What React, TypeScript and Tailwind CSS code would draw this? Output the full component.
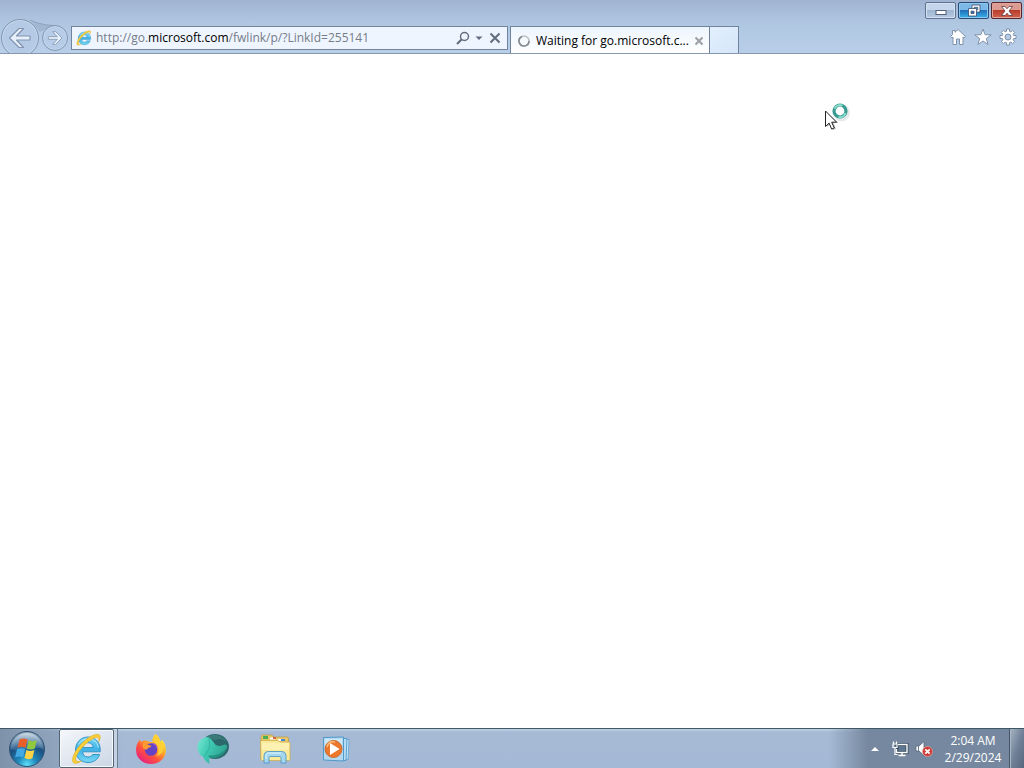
import React from 'react';

const IeLogo: React.FC<{ id: string; className: string }> = ({ id, className }) => (
  <svg viewBox="0 0 32 32" className={className} aria-hidden="true">
    <defs>
      <linearGradient id={id} x1="0" y1="0" x2="0" y2="1">
        <stop offset="0" stopColor="#7bd6f5" />
        <stop offset="0.5" stopColor="#3fb2e6" />
        <stop offset="1" stopColor="#79d9f5" />
      </linearGradient>
    </defs>
    <path
      d="M17 4C9.600 4 4.500 9.700 4.500 17S9.800 29.500 17 29.500c5.600 0 10-3 11.600-8h-7c-1 1.700-2.500 2.500-4.600 2.500-3.200 0-5.200-2-5.400-5.200H29.200C30 10.500 25 4 17 4Zm-5.300 10.500C12.200 11.500 14.200 9.700 17 9.700s4.800 1.800 5.200 4.800Z"
      fill={`url(#${id})`}
      stroke="#2b8fc4"
      strokeWidth="0.9"
    />
    <path d="M7.500 11.500C9.500 8 13 5.800 17 5.800c5.500 0 9.500 3.500 10.300 8.500" fill="none" stroke="#b9ecfd" strokeWidth="1" />
    <path
      d="M27.700 8.500C29.500 5 29.800 2.500 27.800 1.700 23-.1 12.200 7.200 6.400 15.600.8 23.700.1 30.300 4.300 30.300c1.700 0 3.800-.9 6-2.300-3.300 1-5.300.8-5.600-1.100-.5-3 2.200-7.800 6.600-12.600C16.900 8.200 24.200 3.300 27 4.300c1.100.4 1.200 1.900.7 4.200Z"
      fill="#f9cf38"
      stroke="#e0b32a"
      strokeWidth="0.8"
    />
  </svg>
);

const ArrowIcon: React.FC<{ flip?: boolean; className: string }> = ({ flip, className }) => (
  <svg viewBox="0 0 24 24" className={className} aria-hidden="true">
    <path
      d="M1.500 12 11 2.500h4.500L8.500 10H22v4H8.500l7 7.500H11Z"
      transform={flip ? 'matrix(-1 0 0 1 24 0)' : undefined}
      fill="#e7f0fb"
      stroke="#8295b0"
      strokeWidth="1.200"
      strokeLinejoin="round"
    />
  </svg>
);

const WindowButtons: React.FC = () => (
  <div className="flex h-5 justify-end gap-[2px] pr-[2px]">
    <button
      aria-label="Minimize"
      className="mt-[2px] flex h-[17px] w-[31px] items-center justify-center rounded-[2px] border border-[#60738e] bg-linear-to-b from-[#c6d6ea] from-45% via-[#9fb5d1] via-50% to-[#b7cae3] shadow-[inset_0_0_0_1px_#d3e1f2]"
    >
      <svg viewBox="0 0 14 12" className="h-3 w-[14px]">
        <rect x="2" y="5.500" width="10" height="4" fill="#fff" stroke="#53607a" />
      </svg>
    </button>
    <button
      aria-label="Restore"
      className="mt-[2px] flex h-[17px] w-[31px] items-center justify-center rounded-[2px] border border-[#294c75] bg-linear-to-b from-[#7db9e8] from-45% via-[#2371b8] via-50% to-[#38b5ed] shadow-[inset_0_0_0_1px_#8dc7ed]"
    >
      <svg viewBox="0 0 14 13" className="h-[13px] w-[14px]">
        <path d="M5 1h8v7H5Zm2.200 2.300v2.400h3.600V3.300Z" fill="#fff" fillRule="evenodd" stroke="#374a69" strokeWidth="0.800" />
        <path d="M1.500 4.500H9.500V12h-8Z" fill="#fff" stroke="#374a69" strokeWidth="0.800" />
        <path d="M4 7.200h3v2.300H4Z" fill="#2c77b8" stroke="#374a69" strokeWidth="0.800" />
      </svg>
    </button>
    <button
      aria-label="Close"
      className="mt-[2px] flex h-[17px] w-[31px] items-center justify-center rounded-[2px] border border-[#57262b] bg-linear-to-b from-[#dc9c93] from-45% via-[#ba3c2b] via-50% to-[#cf6350] shadow-[inset_0_0_0_1px_#e2a49b]"
    >
      <svg viewBox="0 0 14 12" className="h-3 w-[14px]">
        <path
          d="M1.500 1.500H5L7 3.700l2-2.200h3.500L9 6l3.500 4.500H9L7 8.300l-2 2.200H1.500L5 6Z"
          fill="#fff"
          stroke="#643a40"
          strokeWidth="0.800"
        />
      </svg>
    </button>
  </div>
);

const AddressBar: React.FC = () => (
  <div className="mt-[6px] ml-[3px] flex h-6 min-w-0 flex-1 items-center border border-[#72849d] bg-[#eff5fe] pr-[3px] pl-1">
    <IeLogo id="ieSmall" className="h-4 w-4 shrink-0" />
    <div
      role="textbox"
      aria-label="Address"
      tabIndex={0}
      className="ml-1 min-w-0 flex-1 truncate text-[12px] leading-5 text-[#747c88]"
    >
      http://go.<span className="text-black">microsoft.com</span>/fwlink/p/?LinkId=255141
    </div>
    <button aria-label="Search" className="flex h-5 w-[18px] items-center justify-center">
      <svg viewBox="0 0 16 16" className="h-4 w-4" fill="none" stroke="#626d7e">
        <circle cx="9.500" cy="6.500" r="4" strokeWidth="1.500" />
        <path d="M6.500 9.500 2 14" strokeWidth="2.200" />
      </svg>
    </button>
    <button aria-label="Show address list" className="flex h-5 w-[14px] items-center justify-center">
      <svg viewBox="0 0 8 4" className="h-1 w-2">
        <path d="M.5.5h7L4 4Z" fill="#626d7e" />
      </svg>
    </button>
    <button aria-label="Stop" className="flex h-5 w-[18px] items-center justify-center">
      <svg viewBox="0 0 12 12" className="h-3 w-3">
        <path d="m1.500 1.500 9 9m0-9-9 9" stroke="#626d7e" strokeWidth="2" />
      </svg>
    </button>
  </div>
);

const Tabs: React.FC = () => (
  <div className="mt-[6px] ml-[2px] flex h-7">
    <div className="flex w-[200px] items-center border border-b-0 border-[#72849d] bg-linear-to-b from-[#edf5fd] to-white pr-1 pl-[7px]">
      <svg viewBox="0 0 12 12" className="h-3 w-3 shrink-0" fill="none" strokeWidth="1.600">
        <circle cx="6" cy="6" r="5" stroke="#bcc0c4" />
        <path d="M4 1.400A5 5 0 1 0 11 6" stroke="#858b92" />
      </svg>
      <span className="ml-[6px] flex-1 text-[12px] leading-5 whitespace-nowrap text-black">Waiting for go.microsoft.c...</span>
      <button aria-label="Close tab" className="flex h-4 w-3 items-center justify-center">
        <svg viewBox="0 0 10 10" className="h-[10px] w-[10px]">
          <path d="m1.500 1.500 7 7m0-7-7 7" stroke="#9c9fa3" strokeWidth="2" />
        </svg>
      </button>
    </div>
    <button
      aria-label="New tab"
      className="w-[29px] border border-b-0 border-l-0 border-[#72849d] bg-linear-to-br from-[#e2effc] to-[#d5e6f9]"
    />
  </div>
);

const BrowserTools: React.FC = () => (
  <div className="mt-2 flex w-[285px] shrink justify-end gap-[7px] pr-[7px]">
    <button aria-label="Home" className="h-[18px] w-[18px]">
      <svg viewBox="0 0 18 18" className="h-[18px] w-[18px]" fill="#fff" stroke="#8092aa" strokeLinejoin="round">
        <path d="m9 1.500 7.500 7-1.500 1.300-1-.8v7.500h-3.500V11h-3v5.500H4V9l-1 .8-1.500-1.300 2-1.900V2.500H6v1.800Z" />
      </svg>
    </button>
    <button aria-label="Favorites" className="h-[18px] w-[18px]">
      <svg viewBox="0 0 18 18" className="h-[18px] w-[18px]" fill="#fff" stroke="#8092aa" strokeLinejoin="round">
        <path d="m9 1 2.100 5.700 6.100.2-4.900 3.700 1.800 5.900L9 13l-5.100 3.500 1.800-5.900L.8 6.900l6.100-.2Z" />
      </svg>
    </button>
    <button aria-label="Tools" className="h-[18px] w-[18px]">
      <svg viewBox="0 0 18 18" className="h-[18px] w-[18px]" fill="#fff" stroke="#8092aa" strokeLinejoin="round">
        <path
          fillRule="evenodd"
          d="M7.500 1h3v2.300l1.400.6 1.600-1.600 2.200 2.200-1.600 1.600.6 1.400H17v3h-2.300l-.6 1.400 1.600 1.600-2.200 2.200-1.600-1.600-1.400.6V17h-3v-2.300l-1.400-.6-1.600 1.600-2.200-2.200 1.600-1.600-.6-1.400H1v-3h2.300l.6-1.400-1.600-1.600 2.200-2.200 1.600 1.600 1.400-.6ZM9 6a3 3 0 1 0 0 6 3 3 0 0 0 0-6Z"
        />
      </svg>
    </button>
  </div>
);

const BrowserChrome: React.FC = () => (
  <header className="h-[54px] overflow-hidden border-b border-[#8798ae] bg-linear-to-b from-[#a0b4d1] via-[#b0c7e2] via-45% to-[#b8cee9]">
    <WindowButtons />
    <div className="flex">
      <nav className="relative flex shrink-0 pl-px">
        {/* bridge between the two round buttons */}
        <svg viewBox="0 0 30 12" className="absolute top-0 left-7 h-3 w-[30px]" aria-hidden="true">
          <path d="M2 0c8 4 16 5 25 5.500L12 12Z" fill="#a1b6d1" />
          <path d="M2 0c8 4 16 5 25 5.500" fill="none" stroke="#8fa3be" />
        </svg>
        <button
          aria-label="Back"
          className="relative -mt-px flex h-[38px] w-[38px] items-center justify-center rounded-full border border-[#8497b2] bg-[#b5cbe5] shadow-[inset_0_0_0_1px_#c5d7ed]"
        >
          <ArrowIcon className="h-6 w-6" />
        </button>
        <button
          aria-label="Forward"
          className="relative mt-[5px] ml-[3px] flex h-[26px] w-[26px] items-center justify-center rounded-full border border-[#8497b2] bg-[#b7cde7] shadow-[inset_0_0_0_1px_#c5d7ed]"
        >
          <ArrowIcon flip className="h-4 w-4" />
        </button>
      </nav>
      <AddressBar />
      <Tabs />
      <BrowserTools />
    </div>
  </header>
);

const BusyCursor: React.FC = () => (
  <svg viewBox="0 0 30 32" className="absolute top-[47px] left-[823px] h-8 w-[30px]" aria-hidden="true">
    <ellipse cx="18.500" cy="12" rx="8.500" ry="8.500" fill="#e6eaeb" />
    <circle cx="17" cy="10" r="6" fill="#fff" stroke="#379b91" strokeWidth="3.200" />
    <path d="M11.500 7.500a6 6 0 0 1 8-3M22.500 12a6 6 0 0 1-7 4" fill="none" stroke="#8adbcc" strokeWidth="2" />
    <path d="M4 12v14l3.500-3 2.500 6 3-1.300-2.500-5.700h5Z" fill="#bfc3c5" />
    <path d="M2.500 10v15.500l3.600-3.400 2.600 6 2.600-1.100-2.600-5.800h4.900Z" fill="#fff" stroke="#222" strokeWidth="1" />
  </svg>
);

const StartOrb: React.FC = () => (
  <svg viewBox="0 0 38 38" className="h-[38px] w-[38px]" aria-hidden="true">
    <defs>
      <radialGradient id="orb" cx="0.500" cy="0.950" r="0.900">
        <stop offset="0" stopColor="#5ce2fa" />
        <stop offset="0.300" stopColor="#2088bb" />
        <stop offset="0.650" stopColor="#1b4f80" />
        <stop offset="1" stopColor="#8fa5ba" />
      </radialGradient>
      <linearGradient id="gloss" x1="0" y1="0" x2="0" y2="1">
        <stop offset="0" stopColor="#e0eaf2" stopOpacity="0.750" />
        <stop offset="1" stopColor="#7cabca" stopOpacity="0.200" />
      </linearGradient>
    </defs>
    <circle cx="19" cy="19" r="17.500" fill="url(#orb)" stroke="#315272" />
    <path d="M3 19a16 16 0 0 1 32 0c-9-4-20 4-32 0Z" fill="url(#gloss)" />
    <path d="M11.500 9.500c3-1.500 5.500-1.200 8 0l-2 8.300c-2.600-1.300-5.200-1.400-8 0Z" fill="#e95f2b" />
    <path d="M20.800 10.200c2.600 1.300 5.200 1.200 8 0l-2 8.400c-2.900 1.200-5.500 1.200-8-.1Z" fill="#91c83e" />
    <path d="M9.100 19.200c2.800-1.400 5.400-1.200 8 0l-2 8.200c-2.600-1.300-5.200-1.300-8 0Z" fill="#42a9e4" />
    <path d="M18.400 19.900c2.600 1.300 5.200 1.300 8 0l-2 8.300c-2.800 1.300-5.400 1.200-8-.1Z" fill="#ffd345" />
  </svg>
);

const FirefoxIcon: React.FC = () => (
  <svg viewBox="0 0 32 32" className="h-8 w-8" aria-hidden="true">
    <defs>
      <linearGradient id="fox" x1="0.850" y1="0.100" x2="0.200" y2="0.950">
        <stop offset="0" stopColor="#fff044" />
        <stop offset="0.350" stopColor="#ffad29" />
        <stop offset="0.650" stopColor="#ff513d" />
        <stop offset="1" stopColor="#e62082" />
      </linearGradient>
    </defs>
    <path
      d="M20.500 1c3 2 4.200 5 4.500 7 1.200.5 1.700-.2 1.700-1.800 2.800 3 4.300 6.800 4.300 10.800C31 25.300 24.300 31 16 31S1 25.300 1 17c0-4 1.500-7.700 3.800-10.500L6 9c1.500-1.400 3.300-1.800 5-1.500 1.500 1 4 1.500 6.500 1.500-.5-3 .5-6 3-8Z"
      fill="url(#fox)"
    />
    <circle cx="16" cy="16.500" r="6.300" fill="#6542c5" />
    <path d="M10 8c1 2.800 3 4.500 6.500 4.800-.5 2-3.500 1.700-4.300 3.400-1.500.8-3 0-4.200-1.200C7 12 8 9.500 10 8Z" fill="#ff9a33" />
    <path d="M16 10c4-.7 7 2.300 6.300 6.500-2-4-3.800-5-6.300-6.500Z" fill="#8e50d2" />
    <path d="M20.500 1c-3.800 4.800-1 8 1.300 10.500 2.500 3.500 2.500 8-.3 11.500 7-1.500 9-9 3.500-15-.3-2.500-2-5.500-4.500-7Z" fill="#ffcf35" />
  </svg>
);

const TealOrbIcon: React.FC = () => (
  <svg viewBox="0 0 34 32" className="h-8 w-[34px]" aria-hidden="true">
    <defs>
      <linearGradient id="leaf" x1="0" y1="0" x2="1" y2="0.400">
        <stop offset="0" stopColor="#7be8d4" />
        <stop offset="0.450" stopColor="#3fcab3" />
        <stop offset="1" stopColor="#2fa392" />
      </linearGradient>
    </defs>
    <ellipse cx="19" cy="13.500" rx="14" ry="12.500" fill="#2b686c" />
    <path d="M10 4.500C15 0 26 .5 31 9c-4-3-8-4-12-1.500-3-2-6-3-9-3Z" fill="#3a7a79" />
    <path
      d="M12 4C5 4 1 9.500 1.500 15c.5 4.500 3 8 6 9 .5 3 3 5.500 6.500 7-1-2-1.200-4-.5-6 8 .5 15-3 17.500-10.500.5-2.500-1.500-4-4-2.500-3 1.500-6 1.500-8.500-1.500C17 8 15 5.500 12 4Z"
      fill="url(#leaf)"
    />
    <path d="M12 4.500c3 5 2 13-4.500 19.500" fill="none" stroke="#35b29f" strokeWidth="1" />
    <path d="M30.500 15c-4 5-10 8-18 7.500l1 2.500c8 .5 15-3 17-10Z" fill="#249282" />
  </svg>
);

const FolderIcon: React.FC = () => (
  <svg viewBox="0 0 34 30" className="h-[30px] w-[34px]" aria-hidden="true">
    <path d="M3 3c0-1 .5-2 1.500-2H14l1.500 2H29c1 0 1.500.5 1.500 1.500V25H3Z" fill="#e8c866" stroke="#b99840" strokeWidth="0.700" />
    <path d="M5 2h5v3H5Z" fill="#48ad55" />
    <path d="M12 3.500h6v2h-6Z" fill="#fff" />
    <path d="M15 3h3v2h-3Z" fill="#d5634a" />
    <path d="M20 5h7v2h-7Z" fill="#fff" />
    <path d="M23 5h4v2h-4Z" fill="#4689d1" />
    <path d="M2.500 6.500H20l2 1.500h9c.8 0 1 .5 1 1V25c0 1-.5 1.500-1.500 1.500h-26c-1 0-1.500-.5-1.500-1.500Z" fill="#fae997" stroke="#cba94e" strokeWidth="0.700" />
    <path d="M4 9h27v7H4Z" fill="#fff6c4" opacity="0.600" />
    <path
      d="M6 29v-7c0-3 1.500-4.500 4.500-4.500h13c3 0 4.500 1.500 4.500 4.500v7h-5v-4.500c0-1.500-.5-2-2-2h-8c-1.500 0-2 .5-2 2V29Z"
      fill="#a4d6f0"
      stroke="#5099c4"
      strokeWidth="0.900"
    />
    <path d="M8 25v-3c0-2 1-3 3-3h12" fill="none" stroke="#e2f6ff" strokeWidth="1" />
  </svg>
);

const MediaPlayerIcon: React.FC = () => (
  <svg viewBox="0 0 30 28" className="h-7 w-[30px]" aria-hidden="true">
    <path d="M22 4.500h5l-1 20h-4Z" fill="#cce7f7" stroke="#5ba3d2" strokeWidth="0.800" />
    <path d="M19 3.500h6l-1 22h-5Z" fill="#b5dcf2" stroke="#3f91c8" strokeWidth="0.800" />
    <path d="M1.500 2.500 21.500 2v24L1.500 25Z" fill="#b2d9f0" stroke="#5099ca" />
    <path d="M3 4h17v5L3 17Z" fill="#d8effa" opacity="0.700" />
    <circle cx="11.500" cy="14" r="8.500" fill="#ec792b" stroke="#cd6930" />
    <path d="M5 12c1-4 4-6 8-5" fill="none" stroke="#ffbc75" strokeWidth="1.500" />
    <path d="M8 8v12l9.500-6Z" fill="#fff" />
  </svg>
);

const Taskbar: React.FC = () => (
  <footer className="flex h-10 border-t border-[#3f5866] bg-linear-to-b from-[#c1d1e4] from-0% via-[#a6bad5] via-8% to-[#a4b9d5]">
    <div className="flex flex-1 items-center bg-linear-to-r from-[#7e92aa] to-transparent to-15%">
      <button aria-label="Start" className="ml-2">
        <StartOrb />
      </button>
      <div className="ml-[13px] flex h-full border-r border-[#6d8095] bg-[#c4d1e2] pr-[3px]">
        <button
          aria-label="Internet Explorer"
          className="flex h-[39px] w-[55px] items-center justify-center rounded-[2px] border border-[#526575] bg-linear-to-br from-[#f5f7fa] to-[#cbd6e5] shadow-[inset_0_0_0_1px_#f6f9fc]"
        >
          <IeLogo id="ieLarge" className="h-8 w-8" />
        </button>
      </div>
      <button aria-label="Firefox" className="ml-[17px] flex w-8 justify-center">
        <FirefoxIcon />
      </button>
      <button aria-label="Web browser" className="ml-[29px] flex w-[34px] justify-center">
        <TealOrbIcon />
      </button>
      <button aria-label="Windows Explorer" className="ml-7 flex w-[34px] justify-center">
        <FolderIcon />
      </button>
      <button aria-label="Media Player" className="ml-[30px] flex w-[30px] justify-center">
        <MediaPlayerIcon />
      </button>
    </div>
    <div className="flex items-center bg-linear-to-r from-transparent to-[#76889f] to-20% pl-[38px] text-white">
      <button aria-label="Show hidden icons" className="flex h-5 w-4 items-center justify-center">
        <svg viewBox="0 0 8 4" className="h-1 w-2">
          <path d="M4 0 8 4H0Z" fill="#fff" />
        </svg>
      </button>
      <button aria-label="Network" className="ml-2 h-[18px] w-[18px]">
        <svg viewBox="0 0 18 18" className="h-[18px] w-[18px]">
          <path d="M6 4.500h10v8H6Z" fill="#5f7690" stroke="#34485d" strokeWidth="3" />
          <path d="M7 4.500h9v8H5.500V9" fill="none" stroke="#fff" strokeWidth="1.400" />
          <path d="M11 12.500V15M7.500 15.500h7" fill="none" stroke="#fff" strokeWidth="1.400" />
          <path d="M2 4v3.500h4V4ZM2.500 1.500V4M5.500 1.500V4M4 7.500v7h2.500" fill="none" stroke="#fff" strokeWidth="1.200" />
        </svg>
      </button>
      <button aria-label="Volume muted" className="ml-[6px] h-[18px] w-[18px]">
        <svg viewBox="0 0 18 18" className="h-[18px] w-[18px]">
          <path d="M1 6h3l5-4.500v14L4 11H1Z" fill="#fff" stroke="#4b5c70" strokeWidth="0.700" />
          <path d="M3.500 6v5" stroke="#68798e" />
          <circle cx="12.500" cy="11.500" r="5" fill="#ce3a35" stroke="#e7a4a2" strokeWidth="0.700" />
          <path d="m10.300 9.300 4.400 4.400m0-4.400-4.400 4.400" stroke="#fff" strokeWidth="1.700" />
        </svg>
      </button>
      <button className="mr-1 ml-2 w-16 text-center text-[12px] leading-[17px]">
        <span className="block">2:04 AM</span>
        <span className="block">2/29/2024</span>
      </button>
      <button
        aria-label="Show desktop"
        className="h-full w-[15px] border-l border-[#465568] bg-linear-to-br from-[#a9b5c4] via-[#718198] to-[#56677e] shadow-[inset_1px_0_0_#a8b5c5]"
      />
    </div>
  </footer>
);

const App: React.FC = () => {
  return (
    <div className="flex min-h-screen flex-col bg-white font-['Open_Sans','Noto_Sans',sans-serif]">
      <BrowserChrome />
      <main className="relative flex-1 bg-white">
        <BusyCursor />
      </main>
      <Taskbar />
    </div>
  );
};

export default App;
